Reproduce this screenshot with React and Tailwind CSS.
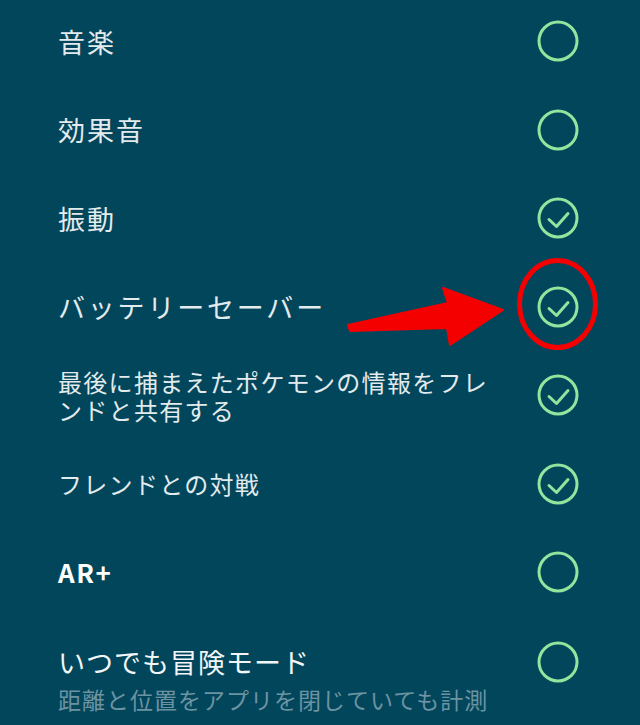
import React from "react";

const GREEN = "#8fe69c";

function Toggle({ checked }) {
  return (
    <svg width="42" height="42" viewBox="0 0 42 42" className="shrink-0">
      <circle cx="21" cy="21" r="19" fill="none" stroke={GREEN} strokeWidth="3" />
      {checked && (
        <path
          d="M12 22.5 L19.5 29.5 L31 16.5"
          fill="none"
          stroke={GREEN}
          strokeWidth="3"
          strokeLinecap="round"
          strokeLinejoin="round"
        />
      )}
    </svg>
  );
}

const font = { fontFamily: '"Noto Sans CJK JP", "Noto Sans", sans-serif' };

function Row({ children, checked }) {
  return (
    <div className="flex h-[88.5px] items-center justify-between pl-[58px] pr-[61px]">
      {children}
      <Toggle checked={checked} />
    </div>
  );
}

export default function App() {
  return (
    <div
      className="relative h-[725px] w-[640px] overflow-hidden bg-[#02465c]"
      style={font}
    >
      <div className="-mt-[3px] flex flex-col">
        <Row checked={false}>
          <span className="text-[27px] leading-none tracking-[2px] text-[#e3ebed]">音楽</span>
        </Row>
        <Row checked={false}>
          <span className="text-[27px] leading-none tracking-[2px] text-[#e3ebed]">効果音</span>
        </Row>
        <Row checked={true}>
          <span className="text-[27px] leading-none tracking-[2px] text-[#e3ebed]">振動</span>
        </Row>
        <Row checked={true}>
          <span className="text-[27px] leading-none tracking-[2.8px] text-[#e3ebed]">バッテリーセーバー</span>
        </Row>
        <Row checked={true}>
          <span className="mt-[1px] whitespace-nowrap text-[24px] leading-[28px] tracking-[1.3px] text-[#e3ebed]">
            最後に捕まえたポケモンの情報をフレ
            <br />
            ンドと共有する
          </span>
        </Row>
        <Row checked={true}>
          <span className="text-[24px] leading-none tracking-[1.3px] text-[#e3ebed]">フレンドとの対戦</span>
        </Row>
        <Row checked={false}>
          <span className="text-[26px] font-bold leading-none tracking-[1.5px] text-white">AR+</span>
        </Row>
        <div className="flex flex-col pl-[58px] pr-[61px] pt-[24px]">
          <div className="flex items-center justify-between">
            <span className="text-[27px] leading-none tracking-[1px] text-[#f2f6f7]">いつでも冒険モード</span>
            <Toggle checked={false} />
          </div>
          <span className="mt-[4px] text-[23px] leading-[24px] tracking-[1px] text-[#6b93a1]">
            距離と位置をアプリを閉じていても計測
          </span>
        </div>
      </div>

      <svg
        className="pointer-events-none absolute left-0 top-0"
        width="640"
        height="725"
        viewBox="0 0 640 725"
      >
        <polygon
          points="348,325 448,303 443,288 503,310 450,345 447,328 350,331"
          fill="#f50000"
          stroke="#f50000"
          strokeWidth="2"
          strokeLinejoin="round"
        />
        <ellipse cx="557.5" cy="304" rx="38" ry="43.5" fill="none" stroke="#f50000" strokeWidth="5" />
      </svg>
    </div>
  );
}
